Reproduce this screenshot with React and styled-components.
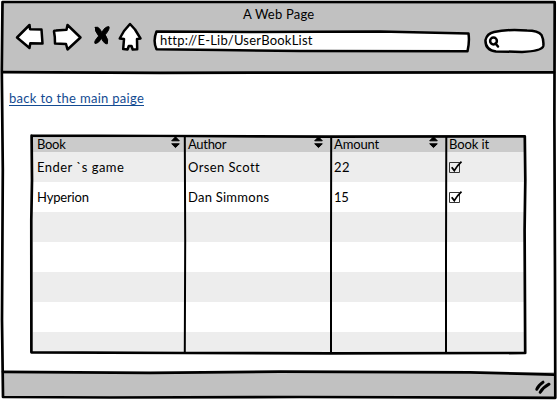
import React from "react";
import styled, { createGlobalStyle } from "styled-components";

const GlobalStyle = createGlobalStyle`
  * { box-sizing: border-box; }
  body { margin: 0; background: #fff; }
`;

const Window = styled.main`
  position: relative;
  display: flex;
  flex-direction: column;
  width: 557px;
  height: 400px;
  padding: 2px 2px 2px 3px;
  overflow: hidden;
  font-family: Lato, "Open Sans", sans-serif;
  font-size: 13px;
  line-height: 16px;
  color: #000;
`;

const Header = styled.header`
  height: 71px;
  flex: none;
  background: #c1c1c1;
`;

const Title = styled.h1`
  margin: 0;
  padding: 4px 0 0 240px;
  height: 22px;
  font-size: 13px;
  font-weight: 400;
  line-height: 16px;
  white-space: nowrap;
  letter-spacing: ${(p) => p.$spacing}px;
`;

const Toolbar = styled.nav`
  display: flex;
  align-items: flex-start;
  padding-left: 11px;
`;

const Icon = styled.svg`
  display: block;
  flex: none;
  fill: #fff;
  stroke: #000;
  stroke-width: 2.5;
  stroke-linejoin: round;
  stroke-linecap: round;
  overflow: visible;
`;

const ToolButton = styled.button`
  display: block;
  flex: none;
  width: ${(p) => p.$width}px;
  height: 30px;
  padding: 0;
  border: 0;
  background: none;
`;

const Field = styled.div`
  position: relative;
  flex: none;
  width: ${(p) => p.$width}px;
  height: 26px;
  margin-left: ${(p) => p.$gap}px;
  margin-top: 4px;
`;

const FieldShape = styled(Icon)`
  position: absolute;
  inset: 0;
`;

const Address = styled.span`
  position: relative;
  display: block;
  padding: 4px 0 0 7px;
  white-space: nowrap;
  letter-spacing: ${(p) => p.$spacing}px;
`;

const Content = styled.section`
  flex: 1;
  padding: 17px 28px 0 28px;
  background: #fff;
`;

const BackLink = styled.a`
  display: block;
  width: 135px;
  height: 16px;
  margin-left: -22px;
  border-bottom: 1px solid #134b92;
  color: #134b92;
  line-height: 17px;
  white-space: nowrap;
  letter-spacing: ${(p) => p.$spacing}px;
`;

const TableFrame = styled.div`
  position: relative;
  width: 495px;
  height: 219px;
  margin-top: 29px;
  padding: 3px 2px 2px;
`;

const Row = styled.div`
  display: grid;
  grid-template-columns: 151px 146px 115px 79px;
  height: ${(p) => p.$height}px;
  background: ${(p) => p.$fill};
`;

const Cell = styled.div`
  display: flex;
  justify-content: space-between;
  padding: ${(p) => p.$top}px 4px 0 4px;
  white-space: nowrap;
  line-height: 16px;
  letter-spacing: ${(p) => p.$spacing || 0}px;
`;

const HeadCell = styled(Cell)`
  padding-right: ${(p) => p.$right}px;
  line-height: 13px;
`;

const Lines = styled.svg`
  position: absolute;
  inset: 0;
  fill: none;
  stroke: #000;
  stroke-width: 2.7;
  stroke-linejoin: round;
  stroke-linecap: round;
  pointer-events: none;
  overflow: visible;
`;

const Footer = styled.footer`
  display: flex;
  justify-content: flex-end;
  height: 26px;
  flex: none;
  padding: 7px 4px 0 0;
  background: #c1c1c1;
`;

const SortSvg = styled.svg`
  display: block;
  flex: none;
  margin: -2px 0 0;
  overflow: visible;
  fill: #000;
  stroke: #000;
  stroke-linejoin: round;
`;

const SortIcon = () => (
  <SortSvg width="9" height="13" viewBox="0 0 9 13">
    <path d="M4.5 .8 8.3 4.8H.7ZM.7 7.8H8.3L4.5 11.6Z" />
  </SortSvg>
);

const CheckSvg = styled.svg`
  display: block;
  overflow: visible;
`;

const CheckIcon = () => (
  <CheckSvg width="14" height="14" viewBox="0 0 14 14">
    <path d="M.5 2.5H10.5V12.5H.5Z" fill="none" stroke="#333" strokeWidth="1" />
    <path d="M2.7 7.2 5.3 10.6Q8 6 12.5 1.7" fill="none" stroke="#000" strokeWidth="1.8" />
  </CheckSvg>
);

const columns = [
  { label: "Book", spacing: -0.3, right: 4, sort: true },
  { label: "Author", spacing: -0.3, right: 7, sort: true },
  { label: "Amount", spacing: -0.15, right: 7, sort: true },
  { label: "Book it", spacing: -0.1, right: 4, sort: false },
];

const books = [
  { values: ["Ender `s game", "Orsen Scott", "22"], spacing: [0.45, 0.4, 0.5] },
  { values: ["Hyperion", "Dan Simmons", "15"], spacing: [-0.15, 0.25, -0.4] },
];

const fillers = [30, 30, 30, 30, 21];

export default function App() {
  return (
    <>
      <GlobalStyle />
      <Window>
        <Header>
          <Title $spacing={0.2}>A Web Page</Title>
          <Toolbar>
            <ToolButton $width={38} aria-label="Back">
              <Icon width="38" height="30" viewBox="14 24 38 30">
                <path d="M17 37.5 29.5 25 30 29.2 41.5 29.5 42.5 43.5 30.3 43.2 29.5 48Z" />
              </Icon>
            </ToolButton>
            <ToolButton $width={40} aria-label="Forward">
              <Icon width="40" height="30" viewBox="52 24 40 30">
                <path d="M54 31.5Q54 30.5 56 30.5L66.5 29.7 67.5 25 80.5 37.5 67.5 49.5 66 44 55 43.5 54.8 37Z" />
              </Icon>
            </ToolButton>
            <ToolButton $width={25} aria-label="Stop">
              <Icon width="25" height="30" viewBox="92 24 25 30">
                <path d="M95.3 27.3Q98 25.8 100.3 29.7L101.8 32.5Q105 26.3 109 26.7 110 29 105.2 34.8 109 40 107.3 43.8 104.5 44.5 101.5 38.5 98 44 95 43.5 93.6 41.5 98.7 36 94.2 30.5 95.3 27.3Z" fill="#000" strokeWidth="1" />
              </Icon>
            </ToolButton>
            <ToolButton $width={35} aria-label="Home">
              <Icon width="35" height="30" viewBox="117 24 35 30">
                <path d="M130 24 135 29.5 140.5 38.5 137 39 137.2 49.3 132.7 49.5 131.5 46 128.8 46 127.5 49.5 123.2 49 124 39 119.7 38.5 124 31Z" />
              </Icon>
            </ToolButton>
            <Field $width={320} $gap={1}>
              <FieldShape width="320" height="26" viewBox="153 28 320 26">
                <path d="M156.5 31.5 250 32 380 31.6 468.5 33.5Q469.7 42 467.5 51.3L300 51 220 50 156.5 49.2Q152.7 41 156.5 31.5Z" />
              </FieldShape>
              <Address $spacing={0.22}>http://E-Lib/UserBookList</Address>
            </Field>
            <Field $width={64} $gap={10}>
              <FieldShape width="64" height="26" viewBox="483 28 64 26">
                <path d="M494 32Q507 29 527 30.5 538 30.5 541.5 35 544 40 543.3 46 542 51 522 52 508 51.5 496 51.5 485 50 485.5 40 487 33.5 494 32Z" />
                <circle cx="493.5" cy="41" r="3.4" />
                <path d="M495.5 43.5 498 46.5" />
              </FieldShape>
            </Field>
          </Toolbar>
        </Header>
        <Content>
          <BackLink $spacing={0.3}>back to the main paige</BackLink>
          <TableFrame>
            <Row $height={14} $fill="#cbcbcb">
              {columns.map((c) => (
                <HeadCell key={c.label} $top={0} $right={c.right} $spacing={c.spacing}>
                  <span>{c.label}</span>
                  {c.sort && <SortIcon />}
                </HeadCell>
              ))}
            </Row>
            {books.map((book, i) => (
              <Row key={book.values[0]} $height={30} $fill={i ? "#fff" : "#ededed"}>
                {book.values.map((value, j) => (
                  <Cell key={value} $top={7} $spacing={book.spacing[j]}>{value}</Cell>
                ))}
                <Cell $top={8}><CheckIcon /></Cell>
              </Row>
            ))}
            {fillers.map((height, i) => (
              <Row key={i} $height={height} $fill={i % 2 ? "#fff" : "#ededed"} />
            ))}
            <Lines width="495" height="219" viewBox="31 135 495 219">
              <path d="M31.6 135.6 160 136 330 136.6 524.8 136.3 525.3 180 524.6 230 525.2 353 330 353.3 185 353 31.4 352.3 31.3 220 32 180 31.6 135.6" />
              <path d="M184.8 137 185.2 240 184.8 352M331.2 137 331 250 331 352M446.3 137 446 260 446 353" strokeWidth="2" />
            </Lines>
          </TableFrame>
        </Content>
        <Footer>
          <Icon width="17" height="16" viewBox="534 379 17 16">
            <path d="M536.8 389.3Q538.5 385 543 382.2M540.2 392.3Q543.5 387 549 384.2" strokeWidth="3" fill="none" />
          </Icon>
        </Footer>
        <Lines width="557" height="400" viewBox="0 0 557 400">
          <path d="M2.5 2 280 2 554.7 2.2 554.4 120 555 280 555.3 397.8 300 397 110 397.5 3 397 2 320 2.8 170 1.8 70Z" />
          <path d="M3 72.2 160 72.8 300 72.6 554 72.3M3 371.8 150 372.8 280 371.6 470 372.3 554 374.7" />
        </Lines>
      </Window>
    </>
  );
}
